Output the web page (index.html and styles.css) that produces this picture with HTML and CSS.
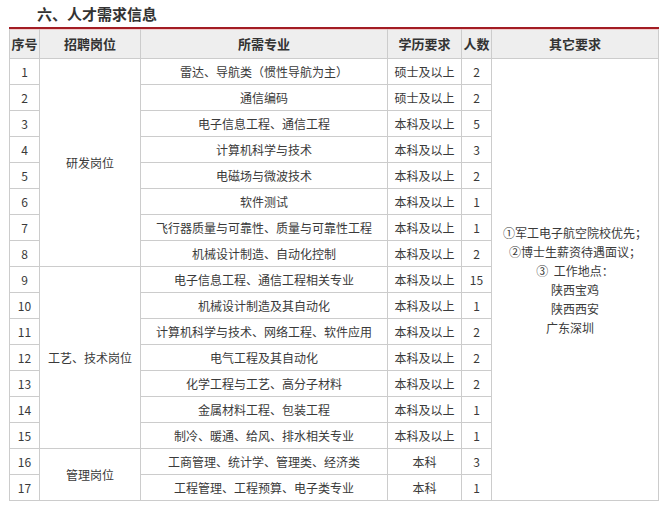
FILE: index.html
```html
<!DOCTYPE html>
<html lang="zh-CN">
<head>
<meta charset="utf-8">
<title>人才需求信息</title>
<link rel="stylesheet" href="styles.css">
</head>
<body>
<div class="page">
  <h2 class="title">六、人才需求信息</h2>
  <table class="jobs">
    <colgroup>
      <col class="c-no">
      <col class="c-pos">
      <col class="c-major">
      <col class="c-edu">
      <col class="c-num">
      <col class="c-other">
    </colgroup>
    <thead>
      <tr>
        <th>序号</th>
        <th>招聘岗位</th>
        <th>所需专业</th>
        <th>学历要求</th>
        <th>人数</th>
        <th>其它要求</th>
      </tr>
    </thead>
    <tbody>
      <tr>
        <td>1</td>
        <td rowspan="8">研发岗位</td>
        <td>雷达、导航类（惯性导航为主）</td>
        <td>硕士及以上</td>
        <td>2</td>
        <td rowspan="17" class="other">
          <div>①军工电子航空院校优先；</div>
          <div>②博士生薪资待遇面议；</div>
          <div>③&nbsp;&nbsp;工作地点：</div>
          <div>陕西宝鸡</div>
          <div>陕西西安</div>
          <div class="shift">广东深圳</div>
        </td>
      </tr>
      <tr><td>2</td><td>通信编码</td><td>硕士及以上</td><td>2</td></tr>
      <tr><td>3</td><td>电子信息工程、通信工程</td><td>本科及以上</td><td>5</td></tr>
      <tr><td>4</td><td>计算机科学与技术</td><td>本科及以上</td><td>3</td></tr>
      <tr><td>5</td><td>电磁场与微波技术</td><td>本科及以上</td><td>2</td></tr>
      <tr><td>6</td><td>软件测试</td><td>本科及以上</td><td>1</td></tr>
      <tr><td>7</td><td>飞行器质量与可靠性、质量与可靠性工程</td><td>本科及以上</td><td>1</td></tr>
      <tr><td>8</td><td>机械设计制造、自动化控制</td><td>本科及以上</td><td>2</td></tr>
      <tr>
        <td>9</td>
        <td rowspan="7">工艺、技术岗位</td>
        <td>电子信息工程、通信工程相关专业</td>
        <td>本科及以上</td>
        <td>15</td>
      </tr>
      <tr><td>10</td><td>机械设计制造及其自动化</td><td>本科及以上</td><td>1</td></tr>
      <tr><td>11</td><td>计算机科学与技术、网络工程、软件应用</td><td>本科及以上</td><td>2</td></tr>
      <tr><td>12</td><td>电气工程及其自动化</td><td>本科及以上</td><td>2</td></tr>
      <tr><td>13</td><td>化学工程与工艺、高分子材料</td><td>本科及以上</td><td>2</td></tr>
      <tr><td>14</td><td>金属材料工程、包装工程</td><td>本科及以上</td><td>1</td></tr>
      <tr><td>15</td><td>制冷、暖通、给风、排水相关专业</td><td>本科及以上</td><td>1</td></tr>
      <tr>
        <td>16</td>
        <td rowspan="2">管理岗位</td>
        <td>工商管理、统计学、管理类、经济类</td>
        <td>本科</td>
        <td>3</td>
      </tr>
      <tr><td>17</td><td>工程管理、工程预算、电子类专业</td><td>本科</td><td>1</td></tr>
    </tbody>
  </table>
</div>
</body>
</html>
```
FILE: styles.css
```css
html, body {
  margin: 0;
  padding: 0;
  background: #ffffff;
}
body {
  font-family: "Noto Sans CJK SC", "Liberation Sans", sans-serif;
  color: #333333;
}
.page {
  padding-left: 9px;
}
.title {
  margin: 0;
  padding-left: 28px;
  height: 27px;
  line-height: 27px;
  font-size: 15px;
  font-weight: bold;
  color: #333333;
}
.jobs {
  border-collapse: collapse;
  table-layout: fixed;
  width: 649px;
  font-size: 12px;
}
.c-no { width: 30px; }
.c-pos { width: 101px; }
.c-major { width: 247px; }
.c-edu { width: 74px; }
.c-num { width: 30px; }
.c-other { width: 167px; }
.jobs th {
  height: 29px;
  padding: 0;
  background: #eeeeee;
  border: 1px solid #cccccc;
  border-top: 2px solid #a31d24;
  box-shadow: inset 0 1px 0 #f3caca;
  font-size: 13px;
  font-weight: bold;
  color: #333333;
  text-align: center;
  vertical-align: middle;
  white-space: nowrap;
}
.jobs td {
  height: 25px;
  padding: 0;
  border: 1px solid #cccccc;
  text-align: center;
  vertical-align: middle;
  line-height: 16px;
  white-space: nowrap;
  color: #3a3a3a;
}
.jobs td.other {
  line-height: 19px;
  white-space: normal;
}
.shift {
  padding-right: 10px;
}
```
